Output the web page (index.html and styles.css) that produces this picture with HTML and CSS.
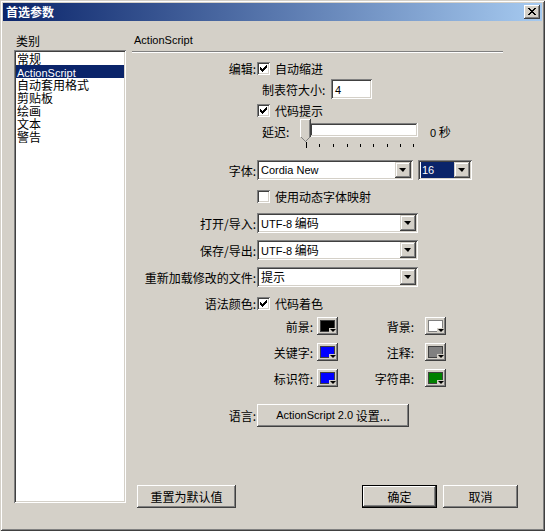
FILE: index.html
```html
<!DOCTYPE html>
<html lang="zh-CN">
<head>
<meta charset="utf-8">
<title>首选参数</title>
<link rel="stylesheet" href="styles.css">
</head>
<body>
<div class="window">
  <div class="titlebar">
    <span class="title">首选参数</span>
    <span class="close"><svg width="8" height="7" viewBox="0 0 8 7" shape-rendering="crispEdges"><path d="M0 0h2v1h-2zM6 0h2v1h-2zM1 1h2v1h-2zM5 1h2v1h-2zM2 2h4v1h-4zM3 3h2v1h-2zM2 4h4v1h-4zM1 5h2v1h-2zM5 5h2v1h-2zM0 6h2v1h-2zM6 6h2v1h-2z" fill="#000"/></svg></span>
  </div>
  <div class="body">
    <div class="left">
      <div class="cat-label">类别</div>
      <ul class="list">
        <li>常规</li>
        <li class="sel"><span class="en">ActionScript</span></li>
        <li>自动套用格式</li>
        <li>剪贴板</li>
        <li>绘画</li>
        <li>文本</li>
        <li>警告</li>
      </ul>
    </div>
    <div class="right">
      <div class="section-title en">ActionScript</div>
      <div class="sep"></div>
      <div class="form">
        <div class="row row-edit">
          <span class="lbl">编辑:</span>
          <span class="cb"><svg width="7" height="7" viewBox="0 0 7 7" shape-rendering="crispEdges"><path d="M6 0h1v3h-1zM5 1h1v3h-1zM4 2h1v3h-1zM0 2h1v3h-1zM1 3h1v3h-1zM3 3h1v3h-1zM2 4h1v3h-1z" fill="#000"/></svg></span>
          <span class="cbtext">自动缩进</span>
        </div>
        <div class="row row-tab sub">
          <span class="sublbl-tab">制表符大小:</span>
          <span class="field"><span class="en">4</span></span>
        </div>
        <div class="row row-hint nolbl">
          <span class="cb"><svg width="7" height="7" viewBox="0 0 7 7" shape-rendering="crispEdges"><path d="M6 0h1v3h-1zM5 1h1v3h-1zM4 2h1v3h-1zM0 2h1v3h-1zM1 3h1v3h-1zM3 3h1v3h-1zM2 4h1v3h-1z" fill="#000"/></svg></span>
          <span class="cbtext">代码提示</span>
        </div>
        <div class="row row-delay sub">
          <span class="sublbl-delay">延迟:</span>
          <svg class="slider" width="120" height="30" viewBox="0 0 120 30" shape-rendering="crispEdges">
            <rect x="10" y="4" width="108" height="14" fill="#fff"/>
            <rect x="10" y="4" width="108" height="1" fill="#808080"/>
            <rect x="10" y="4" width="1" height="14" fill="#808080"/>
            <rect x="11" y="5" width="106" height="1" fill="#404040"/>
            <rect x="11" y="5" width="1" height="12" fill="#404040"/>
            <rect x="10" y="17" width="108" height="1" fill="#fff"/>
            <rect x="117" y="4" width="1" height="14" fill="#fff"/>
            <rect x="11" y="16" width="106" height="1" fill="#d4d0c8"/>
            <rect x="116" y="5" width="1" height="12" fill="#d4d0c8"/>
            <polygon points="0,0 11,0 11,18 6,23 5,23 0,18" fill="#d4d0c8"/>
            <rect x="0" y="0" width="11" height="1" fill="#fff"/>
            <rect x="0" y="0" width="1" height="18" fill="#fff"/>
            <rect x="10" y="0" width="1" height="18" fill="#404040"/>
            <rect x="9" y="1" width="1" height="17" fill="#808080"/>
            <path d="M1 18l5 5M10 18l-5 5" stroke="#808080" shape-rendering="auto"/>
            <rect x="6" y="23" width="1" height="6" fill="#000"/>
            <rect x="19" y="25" width="1" height="3" fill="#000"/>
            <rect x="33" y="25" width="1" height="3" fill="#000"/>
            <rect x="47" y="25" width="1" height="3" fill="#000"/>
            <rect x="60" y="25" width="1" height="3" fill="#000"/>
            <rect x="73" y="25" width="1" height="3" fill="#000"/>
            <rect x="87" y="25" width="1" height="3" fill="#000"/>
            <rect x="100" y="25" width="1" height="3" fill="#000"/>
            <rect x="113" y="25" width="1" height="3" fill="#000"/>
          </svg>
          <span class="delay-val"><span class="en">0</span> 秒</span>
        </div>
        <div class="row row-font">
          <span class="lbl">字体:</span>
          <span class="combo combo-font"><span class="combo-text en">Cordia New</span><span class="dd"><span class="tri"></span></span></span>
          <span class="combo combo-size"><span class="combo-text en selected">16</span><span class="dd"><span class="tri"></span></span></span>
        </div>
        <div class="row row-map nolbl">
          <span class="cb"></span>
          <span class="cbtext">使用动态字体映射</span>
        </div>
        <div class="row row-open">
          <span class="lbl">打开/导入:</span>
          <span class="combo combo-enc"><span class="combo-text"><span class="en">UTF-8</span> 编码</span><span class="dd"><span class="tri"></span></span></span>
        </div>
        <div class="row row-save">
          <span class="lbl">保存/导出:</span>
          <span class="combo combo-enc"><span class="combo-text"><span class="en">UTF-8</span> 编码</span><span class="dd"><span class="tri"></span></span></span>
        </div>
        <div class="row row-reload">
          <span class="lbl">重新加载修改的文件:</span>
          <span class="combo combo-enc"><span class="combo-text">提示</span><span class="dd"><span class="tri"></span></span></span>
        </div>
        <div class="row row-syntax">
          <span class="lbl">语法颜色:</span>
          <span class="cb"><svg width="7" height="7" viewBox="0 0 7 7" shape-rendering="crispEdges"><path d="M6 0h1v3h-1zM5 1h1v3h-1zM4 2h1v3h-1zM0 2h1v3h-1zM1 3h1v3h-1zM3 3h1v3h-1zM2 4h1v3h-1z" fill="#000"/></svg></span>
          <span class="cbtext">代码着色</span>
        </div>
        <div class="colors">
          <span class="clbl1">前景:</span>
          <span class="swatch"><span class="chip c-black"></span><span class="drop"><span class="tri-s"></span></span></span>
          <span class="clbl2">背景:</span>
          <span class="swatch"><span class="chip c-white"></span><span class="drop"><span class="tri-s"></span></span></span>
          <span class="clbl1">关键字:</span>
          <span class="swatch"><span class="chip c-blue"></span><span class="drop"><span class="tri-s"></span></span></span>
          <span class="clbl2">注释:</span>
          <span class="swatch"><span class="chip c-gray"></span><span class="drop"><span class="tri-s"></span></span></span>
          <span class="clbl1">标识符:</span>
          <span class="swatch"><span class="chip c-blue"></span><span class="drop"><span class="tri-s"></span></span></span>
          <span class="clbl2">字符串:</span>
          <span class="swatch"><span class="chip c-green"></span><span class="drop"><span class="tri-s"></span></span></span>
        </div>
        <div class="row row-lang">
          <span class="lbl">语言:</span>
          <span class="btn btn-lang"><span class="en">ActionScript 2.0</span>&nbsp;设置...</span>
        </div>
      </div>
      <div class="footer">
        <span class="btn btn-reset">重置为默认值</span>
        <span class="btn btn-ok default">确定</span>
        <span class="btn btn-cancel">取消</span>
      </div>
    </div>
  </div>
</div>
</body>
</html>
```

FILE: styles.css
```css
* { box-sizing: border-box; }
html, body { margin: 0; padding: 0; background: #d4d0c8; }
body {
  font-family: "Noto Sans CJK SC", sans-serif;
  font-size: 12px;
  line-height: 13px;
  color: #000;
}
.en { font-family: "Liberation Sans", Arial, sans-serif; font-size: 11px; }

.window {
  width: 545px;
  height: 531px;
  background: #d4d0c8;
  padding: 3px;
  display: flex;
  flex-direction: column;
  box-shadow: inset 1px 1px #d4d0c8, inset -1px -1px #404040, inset 2px 2px #fff, inset -2px -2px #808080;
}
.titlebar {
  height: 18px;
  flex: none;
  background: linear-gradient(to right, #0a246a, #a6caf0);
  display: flex;
  align-items: center;
  justify-content: space-between;
  padding: 0 2px 0 3px;
}
.title { color: #fff; font-weight: bold; font-size: 12px; line-height: 14px; }
.close {
  width: 16px;
  height: 14px;
  background: #d4d0c8;
  box-shadow: inset -1px -1px #404040, inset 1px 1px #fff, inset -2px -2px #808080;
  display: flex;
  align-items: center;
  justify-content: center;
  padding-bottom: 1px;
}
.close svg { display: block; }

.body {
  flex: 1;
  display: grid;
  grid-template-columns: 112px 386px;
  column-gap: 6px;
  padding: 13px 0 0 11px;
}
.left { display: flex; flex-direction: column; }
.cat-label { height: 13px; padding-left: 2px; }
.list {
  list-style: none;
  margin: 3px 0 0;
  padding: 2px;
  height: 453px;
  background: #fff;
  box-shadow: inset 1px 1px #808080, inset -1px -1px #fff, inset 2px 2px #404040, inset -2px -2px #d4d0c8;
}
.list li { height: 13px; line-height: 13px; padding-left: 1px; white-space: nowrap; }
.list li.sel { background: #0a246a; color: #fff; }

.right { display: flex; flex-direction: column; }
.section-title { height: 13px; line-height: 13px; padding-left: 2px; }
.sep {
  width: 371px;
  height: 2px;
  margin-top: 4px;
  border-top: 1px solid #808080;
  border-bottom: 1px solid #fff;
}
.form { display: flex; flex-direction: column; }
.row { display: flex; align-items: center; white-space: nowrap; }
.lbl { width: 125px; text-align: right; padding-right: 1px; flex: none; }
.nolbl { padding-left: 125px; }
.sub { padding-left: 130px; }

.cb {
  width: 13px;
  height: 13px;
  flex: none;
  background: #fff;
  box-shadow: inset 1px 1px #808080, inset -1px -1px #fff, inset 2px 2px #404040, inset -2px -2px #d4d0c8;
  display: flex;
  align-items: center;
  justify-content: center;
}
.cb svg { display: block; }
.cbtext { margin-left: 5px; }

.row-edit { margin-top: 9px; height: 13px; }
.row-tab { margin-top: 4px; height: 20px; }
.sublbl-tab { width: 69px; flex: none; }
.field {
  width: 41px;
  height: 20px;
  background: #fff;
  padding: 0 4px;
  line-height: 20px;
  box-shadow: inset 1px 1px #808080, inset -1px -1px #fff, inset 2px 2px #404040, inset -2px -2px #d4d0c8;
}
.row-hint { margin-top: 5px; height: 13px; }
.row-delay { margin-top: 2px; height: 30px; align-items: flex-start; }
.sublbl-delay { width: 38px; flex: none; margin-top: 6px; }
.slider { display: block; flex: none; }
.delay-val { margin-left: 10px; margin-top: 6px; }

.combo {
  height: 20px;
  background: #fff;
  padding: 2px;
  display: flex;
  flex: none;
  box-shadow: inset 1px 1px #808080, inset -1px -1px #fff, inset 2px 2px #404040, inset -2px -2px #d4d0c8;
}
.combo-text { flex: 1; line-height: 16px; padding-left: 2px; white-space: nowrap; overflow: hidden; }
.combo-text.selected { background: #0a246a; color: #fff; margin-left: 1px; padding-left: 1px; }
.dd {
  width: 16px;
  height: 16px;
  flex: none;
  background: #d4d0c8;
  box-shadow: inset -1px -1px #404040, inset 1px 1px #d4d0c8, inset -2px -2px #808080, inset 2px 2px #fff;
  display: flex;
  align-items: center;
  justify-content: center;
}
.tri {
  width: 0;
  height: 0;
  border-left: 4px solid transparent;
  border-right: 3px solid transparent;
  border-top: 4px solid #000;
  margin-left: -1px;
}
.combo-font { width: 156px; }
.combo-size { width: 54px; margin-left: 5px; }
.combo-enc { width: 161px; }

.row-font { margin-top: 11px; height: 20px; }
.row-map { margin-top: 10px; height: 13px; }
.row-open { margin-top: 10px; height: 20px; }
.row-save { margin-top: 7px; height: 20px; }
.row-reload { margin-top: 7px; height: 20px; }
.row-syntax { margin-top: 10px; height: 13px; }

.colors {
  margin-top: 7px;
  margin-left: 130px;
  display: grid;
  grid-template-columns: 55px 21px 87px 21px;
  grid-template-rows: 18px 18px 18px;
  row-gap: 8px;
  align-items: center;
  white-space: nowrap;
}
.clbl1 { text-align: right; padding-right: 4px; }
.clbl2 { text-align: right; padding-right: 11px; }
.swatch {
  position: relative;
  width: 21px;
  height: 18px;
  background: #d4d0c8;
  box-shadow: inset -1px -1px #404040, inset 1px 1px #fff, inset -2px -2px #808080;
}
.chip {
  position: absolute;
  left: 3px;
  top: 3px;
  width: 15px;
  height: 12px;
  border: 1px solid #404040;
}
.c-black { background: #000; }
.c-white { background: #fff; border-color: #808080; }
.c-blue { background: #0000ff; }
.c-gray { background: #808080; }
.c-green { background: #008000; }
.drop {
  position: absolute;
  right: 2px;
  bottom: 2px;
  width: 7px;
  height: 5px;
  background: #d4d0c8;
  display: flex;
  align-items: center;
  justify-content: center;
}
.tri-s {
  width: 0;
  height: 0;
  border-left: 3px solid transparent;
  border-right: 3px solid transparent;
  border-top: 3px solid #000;
}

.row-lang { margin-top: 17px; height: 23px; }
.btn {
  height: 23px;
  background: #d4d0c8;
  box-shadow: inset -1px -1px #404040, inset 1px 1px #fff, inset -2px -2px #808080;
  display: flex;
  align-items: center;
  justify-content: center;
  white-space: nowrap;
  flex: none;
}
.btn.default {
  box-shadow: inset 0 0 0 1px #000, inset -2px -2px #404040, inset 2px 2px #fff, inset -3px -3px #808080;
}
.btn-lang { width: 152px; }
.footer { margin-top: 58px; display: flex; }
.btn-reset { width: 99px; margin-left: 5px; }
.btn-ok { width: 75px; margin-left: auto; }
.btn-cancel { width: 75px; margin-left: 6px; }
```
